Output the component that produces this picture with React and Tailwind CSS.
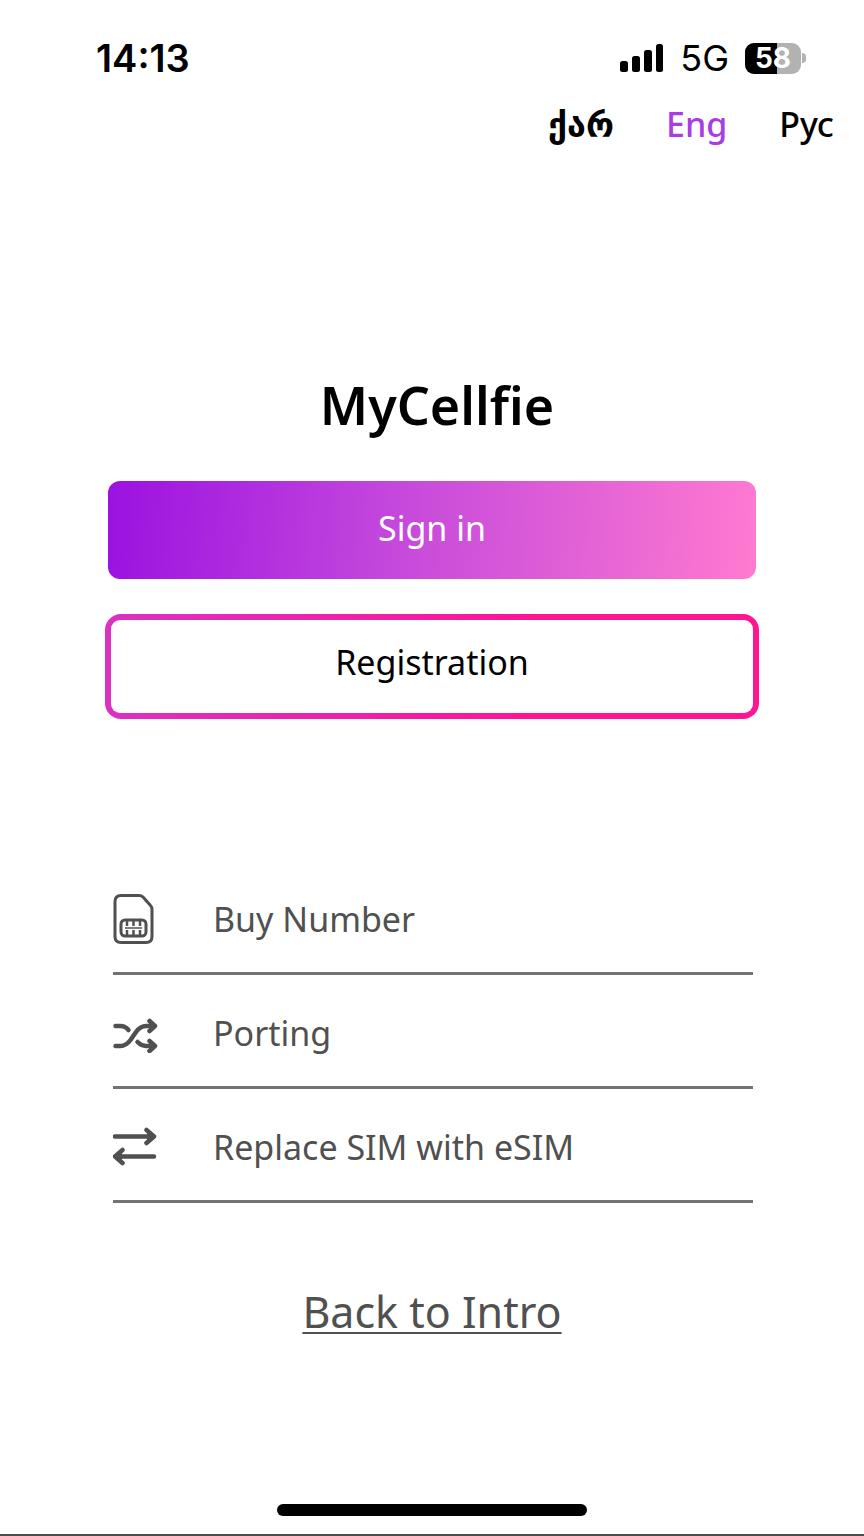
import { useState } from "react";

const LANGUAGES = [
  { code: "ka", label: "ქარ", weight: "font-bold" },
  { code: "en", label: "Eng", weight: "font-medium" },
  { code: "ru", label: "Рус", weight: "font-medium" },
];

const LINKS = [
  { label: "Buy Number", href: "#buy-number", Icon: SimIcon },
  { label: "Porting", href: "#porting", Icon: ShuffleIcon },
  { label: "Replace SIM with eSIM", href: "#esim", Icon: SwapIcon },
];

function SimIcon() {
  return (
    <svg viewBox="0 0 48 52" fill="none" stroke="currentColor" strokeLinejoin="round" className="h-13 w-12">
      <path d="M8 2.5H26C28 2.5 29 3 30 4L37.500 12.500C38.500 13.500 39 14.500 39 16.500V43.500C39 47.500 36.500 49.500 33 49.500H8C4.500 49.500 2 47.500 2 43.500V8.500C2 4.500 4.500 2.500 8 2.500Z" strokeWidth="3" />
      <rect x="8" y="27" width="25" height="16" rx="4" strokeWidth="3" />
      <path d="M14 27V33M20.500 27V33M27 27V33M14 37V43M20.500 37V43M27 37V43" strokeWidth="2.500" />
      <path d="M12 35H29" strokeWidth="1.500" />
    </svg>
  );
}

function ShuffleIcon() {
  return (
    <svg viewBox="0 -3 48 40" fill="none" stroke="currentColor" strokeWidth="4.500" strokeLinecap="round" strokeLinejoin="round" className="h-10 w-12">
      <path d="M2.500 10H7.500C11 10 13.500 11.500 15.500 14" />
      <path d="M2.500 30H7.500C12 30 14.500 28 17.500 24L23 16C26 12 28.500 10 33 10H41" />
      <path d="M24.500 26C27 28.500 29.500 30 33 30H41" />
      <path d="M36.500 5L42 10L36.500 15M36.500 25L42 30L36.500 35" />
      <path d="M37 8V12L41 10ZM37 28V32L41 30Z" fill="currentColor" strokeWidth="2" />
    </svg>
  );
}

function SwapIcon() {
  return (
    <svg viewBox="0 0 48 40" fill="none" stroke="currentColor" strokeWidth="4.500" strokeLinecap="round" strokeLinejoin="round" className="h-10 w-12">
      <path d="M2 9.500H41M33.500 3L41 9.500L33.500 16" />
      <path d="M41 29.500H2M9.500 23L2 29.500L9.500 36" />
      <path d="M35 7V12L39 9.500ZM8 27V32L4 29.500Z" fill="currentColor" strokeWidth="2" />
    </svg>
  );
}

function SignalIcon() {
  return (
    <svg viewBox="0 0 44 30" fill="currentColor" className="h-[30px] w-11">
      <rect x="0" y="18" width="8" height="11" rx="2.500" />
      <rect x="12" y="13" width="8" height="16" rx="2.500" />
      <rect x="24" y="7" width="8" height="22" rx="2.500" />
      <rect x="36" y="1" width="7" height="28" rx="2.500" />
    </svg>
  );
}

function Battery({ level }) {
  return (
    <div className="flex items-center gap-px">
      <div className="relative flex h-[31px] w-14 items-center justify-center overflow-hidden rounded-[9px] bg-[#b2b2b2]">
        <div className="absolute inset-y-0 left-0 bg-black" style={{ width: `${level}%` }} />
        <span className="relative font-[Inter,sans-serif] text-[28px] leading-none font-bold text-white">
          {level}
        </span>
      </div>
      <div className="h-2.5 w-1 rounded-r-full bg-[#b2b2b2]" />
    </div>
  );
}

function StatusBar() {
  return (
    <header className="flex h-12 items-center justify-between pr-[58px] pl-24 font-[Inter,sans-serif]">
      <span className="text-[38px] leading-none font-semibold">14:13</span>
      <div className="flex items-center gap-4">
        <SignalIcon />
        <span className="text-[36px] leading-none">5G</span>
        <Battery level={58} />
      </div>
    </header>
  );
}

export default function App() {
  const [language, setLanguage] = useState("en");

  return (
    <div className="flex min-h-screen flex-col border-b-2 border-[#4b4b50] bg-white pt-[34px] font-['Noto_Sans','DejaVu_Sans',sans-serif] text-black">
      <StatusBar />

      {/* Language switcher */}
      <nav className="mt-[15px] flex items-center justify-end gap-[52px] pr-[30px]">
        {LANGUAGES.map(({ code, label, weight }) => (
          <button
            key={code}
            type="button"
            lang={code}
            onClick={() => setLanguage(code)}
            className={`text-[34px] leading-[54px] ${weight} ${
              language === code ? "text-[#aa3ce4]" : "text-black"
            }`}
          >
            {label}
          </button>
        ))}
      </nav>

      <main className="mx-auto mt-[218px] flex w-3/4 flex-col">
        <h1 className="pl-2.5 text-center text-[52px] leading-[72px] font-semibold">
          MyCellfie
        </h1>

        <button
          type="button"
          className="mt-10 rounded-xl bg-[linear-gradient(94deg,#9a12e0,#c347dc_43%,#ff7ad0)] pt-5 pb-6 text-[34px] leading-[54px] text-white"
        >
          Sign in
        </button>

        <button
          type="button"
          className="-mx-[3px] mt-[35px] rounded-2xl bg-[linear-gradient(97deg,#da32c2,#ff1493_65%)] p-1.5 text-[34px] leading-[54px]"
        >
          <span className="block rounded-[9px] bg-white pt-[15px] pb-6">Registration</span>
        </button>

        {/* Services */}
        <ul className="mt-[142px] mr-[3px] ml-[5px] text-[#505050]">
          {LINKS.map(({ label, href, Icon }) => (
            <li key={label}>
              <a
                href={href}
                className="flex items-center gap-[52px] border-b-[3px] border-[#747274] pt-[31px] pb-[26px] text-[34px] leading-[54px]"
              >
                <Icon />
                {label}
              </a>
            </li>
          ))}
        </ul>

        <a
          href="#intro"
          className="mt-[79px] self-center text-[43px] leading-[60px] text-[#505050] underline decoration-2 underline-offset-4"
        >
          Back to Intro
        </a>
      </main>

      <div className="mx-auto mt-auto mb-[18px] h-3 w-[310px] rounded-full bg-black" />
    </div>
  );
}
